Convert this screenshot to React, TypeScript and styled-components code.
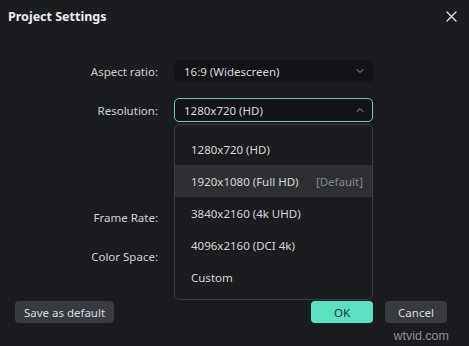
import React from "react";
import styled, { createGlobalStyle } from "styled-components";

const Global = createGlobalStyle`
  html, body { margin: 0; padding: 0; background: #1b1c1f; }
  body { font-family: "Noto Sans", "Open Sans", Arial, sans-serif; }
  * { box-sizing: border-box; }
`;

const Dialog = styled.div`
  position: relative;
  width: 469px;
  height: 346px;
  background: #1b1c1f;
  display: flex;
  flex-direction: column;
  overflow: hidden;
`;

const Header = styled.div`
  height: 32px;
  display: flex;
  align-items: center;
  justify-content: space-between;
  padding: 0 12px 0 8px;
`;

const Title = styled.div`
  font-size: 12.5px;
  font-weight: 700;
  color: #ececec;
`;

const CloseButton = styled.button`
  width: 12px;
  height: 12px;
  padding: 0;
  border: none;
  background: transparent;
  display: flex;
  align-items: center;
  justify-content: center;
`;

const Form = styled.div`
  display: flex;
  flex-direction: column;
  padding-top: 28px;
`;

const Row = styled.div<{ $top: number; $h: number }>`
  display: grid;
  grid-template-columns: 158px 199px;
  column-gap: 16px;
  align-items: center;
  margin-top: ${(p) => p.$top}px;
  height: ${(p) => p.$h}px;
`;

const Label = styled.div`
  text-align: right;
  font-size: 11.5px;
  color: #cfd0d2;
`;

const Field = styled.div`
  position: relative;
  height: 100%;
`;

const Select = styled.div<{ $open?: boolean }>`
  height: 100%;
  border-radius: 5px;
  background: #131417;
  border: 1px solid ${(p) => (p.$open ? "#6fc8b1" : "#131417")};
  display: flex;
  align-items: center;
  justify-content: space-between;
  padding: 0 8px 0 9px;
  font-size: 11.5px;
  color: #d6d7d9;
`;

const Menu = styled.div`
  position: absolute;
  top: calc(100% + 2px);
  left: 0;
  width: 199px;
  height: 176px;
  border: 1px solid #393c40;
  border-radius: 5px;
  background: #1b1c1f;
  padding: 8px 0 6px;
  display: flex;
  flex-direction: column;
  z-index: 2;
`;

const MenuItem = styled.div<{ $active?: boolean }>`
  height: 32px;
  flex: none;
  display: flex;
  align-items: center;
  justify-content: space-between;
  padding: 0 9px 0 16px;
  font-size: 11.5px;
  color: #d6d7d9;
  background: ${(p) => (p.$active ? "#2d2f33" : "transparent")};
`;

const Hint = styled.span`
  color: #85888c;
`;

const Footer = styled.div`
  margin-top: auto;
  display: flex;
  justify-content: space-between;
  align-items: center;
  padding: 0 22px 23px 15px;
`;

const Group = styled.div`
  display: flex;
  gap: 12px;
`;

const Button = styled.button<{ $primary?: boolean; $w: number }>`
  height: 22px;
  width: ${(p) => p.$w}px;
  border: none;
  border-radius: 4px;
  padding: 0;
  font-family: inherit;
  font-size: 11.5px;
  background: ${(p) => (p.$primary ? "#5ce0c1" : "#383b40")};
  color: ${(p) => (p.$primary ? "#173a32" : "#d8d9db")};
`;

const Watermark = styled.div`
  position: absolute;
  right: 20px;
  bottom: 3px;
  font-size: 12.5px;
  color: #8d9094;
  font-family: "Liberation Sans", Arial, sans-serif;
`;

const Chevron = ({ up }: { up?: boolean }) => (
  <svg width="8" height="6" viewBox="0 0 8 6" fill="none">
    <path
      d={up ? "M1 4.5 L4 1.5 L7 4.5" : "M1 1.5 L4 4.5 L7 1.5"}
      stroke="#9c9ea2"
      strokeWidth="1"
      strokeLinecap="round"
      strokeLinejoin="round"
    />
  </svg>
);

const resolutions = [
  "1280x720 (HD)",
  "1920x1080 (Full HD)",
  "3840x2160 (4k UHD)",
  "4096x2160 (DCI 4k)",
  "Custom",
];

export default function App() {
  return (
    <Dialog>
      <Global />
      <Header>
        <Title>Project Settings</Title>
        <CloseButton aria-label="Close">
          <svg width="11" height="11" viewBox="0 0 11 11">
            <path d="M1 1 L10 10 M10 1 L1 10" stroke="#e6e6e6" strokeWidth="1.3" strokeLinecap="round" />
          </svg>
        </CloseButton>
      </Header>
      <Form>
        <Row $top={0} $h={22}>
          <Label>Aspect ratio:</Label>
          <Field>
            <Select>
              <span>16:9 (Widescreen)</span>
              <Chevron />
            </Select>
          </Field>
        </Row>
        <Row $top={16} $h={24}>
          <Label>Resolution:</Label>
          <Field>
            <Select $open>
              <span>1280x720 (HD)</span>
              <Chevron up />
            </Select>
            <Menu>
              {resolutions.map((r, i) => (
                <MenuItem key={r} $active={i === 1}>
                  <span>{r}</span>
                  {i === 1 && <Hint>[Default]</Hint>}
                </MenuItem>
              ))}
            </Menu>
          </Field>
        </Row>
        <Row $top={84} $h={22}>
          <Label>Frame Rate:</Label>
          <Field />
        </Row>
        <Row $top={17} $h={22}>
          <Label>Color Space:</Label>
          <Field />
        </Row>
      </Form>
      <Footer>
        <Button $w={99}>Save as default</Button>
        <Group>
          <Button $primary $w={62}>OK</Button>
          <Button $w={62}>Cancel</Button>
        </Group>
      </Footer>
      <Watermark>wtvid.com</Watermark>
    </Dialog>
  );
}
